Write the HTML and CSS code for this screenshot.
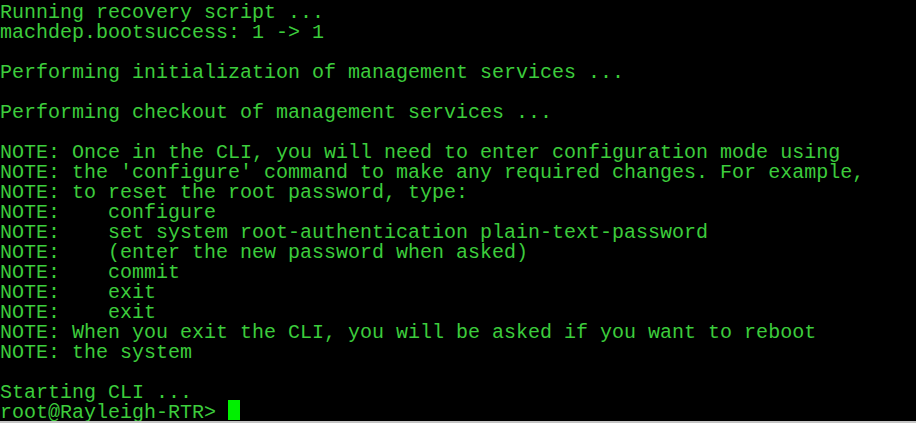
FILE: index.html
```html
<!DOCTYPE html>
<html>
<head>
<meta charset="utf-8">
<link rel="stylesheet" href="styles.css">
</head>
<body>
<div class="term">
<pre class="out">Running recovery script ...
machdep.bootsuccess: 1 -&gt; 1

Performing initialization of management services ...

Performing checkout of management services ...

NOTE: Once in the CLI, you will need to enter configuration mode using
NOTE: the 'configure' command to make any required changes. For example,
NOTE: to reset the root password, type:
NOTE:    configure
NOTE:    set system root-authentication plain-text-password
NOTE:    (enter the new password when asked)
NOTE:    commit
NOTE:    exit
NOTE:    exit
NOTE: When you exit the CLI, you will be asked if you want to reboot
NOTE: the system

Starting CLI ...
root@Rayleigh-RTR&gt; <span class="cursor"> </span></pre>
</div>
<div class="edge"></div>
</body>
</html>
```
FILE: styles.css
```css
html, body {
  margin: 0;
  padding: 0;
  background: #000;
  width: 916px;
  height: 423px;
  overflow: hidden;
}
.term {
  height: 421px;
  background: #000;
  overflow: hidden;
}
.out {
  margin: 0;
  padding-top: 3px;
  font-family: "Liberation Mono", "Courier New", monospace;
  font-size: 20px;
  line-height: 20px;
  color: #3ccc3c;
  white-space: pre;
}
.cursor {
  display: inline-block;
  width: 12px;
  height: 20px;
  margin-top: -3px;
  background: #00f000;
  vertical-align: top;
}
.edge {
  height: 2px;
  background: #c4c4c4;
}
```
